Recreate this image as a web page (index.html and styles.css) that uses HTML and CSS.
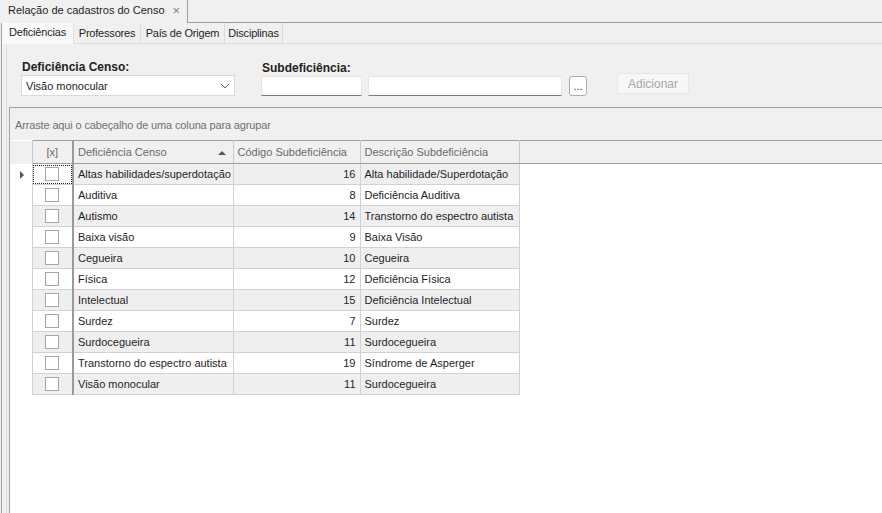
FILE: index.html
```html
<!DOCTYPE html>
<html lang="pt-BR">
  <head>
    <meta charset="UTF-8" />
    <title>Relação de cadastros do Censo</title>
    <link rel="stylesheet" href="styles.css">
  </head>
  <body>
    <div class="doc-tabs">
      <div class="doc-tab">
        <span>Relação de cadastros do Censo</span>
        <span class="close">×</span>
      </div>
      <div class="doc-fill"></div>
    </div>

    <div class="frame">
      <div class="page-tabs">
        <div class="page-tab active">Deficiências</div>
        <div class="page-tab prof">Professores</div>
        <div class="page-tab pais">País de Origem</div>
        <div class="page-tab disc">Disciplinas</div>
        <div class="page-fill"></div>
      </div>

      <div class="page">
        <div class="filters">
          <div class="field">
            <label>Deficiência Censo:</label>
            <div class="select">
              <span>Visão monocular</span>
              <svg width="10" height="6" viewBox="0 0 10 6"><path d="M1 1 L5 5 L9 1" fill="none" stroke="#606060" stroke-width="1"/></svg>
            </div>
          </div>
          <div class="field">
            <label>Subdeficiência:</label>
            <div class="inputs">
              <input type="text" class="code" />
              <input type="text" class="desc" />
              <button class="dots">...</button>
            </div>
          </div>
          <button class="add" disabled>Adicionar</button>
        </div>

        <div class="grid">
          <div class="group-panel">Arraste aqui o cabeçalho de uma coluna para agrupar</div>
          <table>
            <thead>
              <tr>
                <th class="ind"></th>
                <th class="chk">[x]</th>
                <th class="def">Deficiência Censo <span class="sort"></span></th>
                <th class="cod">Código Subdeficiência</th>
                <th class="dsc">Descrição Subdeficiência</th>
                <th class="rest"></th>
              </tr>
            </thead>
            <tbody>
              <tr class="odd">
                <td class="ind"><span class="arrow"></span></td>
                <td class="chk focus"><span class="box"></span></td>
                <td>Altas habilidades/superdotação</td>
                <td class="num">16</td>
                <td>Alta habilidade/Superdotação</td>
                <td class="rest"></td>
              </tr>
              <tr>
                <td class="ind"></td>
                <td class="chk"><span class="box"></span></td>
                <td>Auditiva</td>
                <td class="num">8</td>
                <td>Deficiência Auditiva</td>
                <td class="rest"></td>
              </tr>
              <tr class="odd">
                <td class="ind"></td>
                <td class="chk"><span class="box"></span></td>
                <td>Autismo</td>
                <td class="num">14</td>
                <td>Transtorno do espectro autista</td>
                <td class="rest"></td>
              </tr>
              <tr>
                <td class="ind"></td>
                <td class="chk"><span class="box"></span></td>
                <td>Baixa visão</td>
                <td class="num">9</td>
                <td>Baixa Visão</td>
                <td class="rest"></td>
              </tr>
              <tr class="odd">
                <td class="ind"></td>
                <td class="chk"><span class="box"></span></td>
                <td>Cegueira</td>
                <td class="num">10</td>
                <td>Cegueira</td>
                <td class="rest"></td>
              </tr>
              <tr>
                <td class="ind"></td>
                <td class="chk"><span class="box"></span></td>
                <td>Física</td>
                <td class="num">12</td>
                <td>Deficiência Física</td>
                <td class="rest"></td>
              </tr>
              <tr class="odd">
                <td class="ind"></td>
                <td class="chk"><span class="box"></span></td>
                <td>Intelectual</td>
                <td class="num">15</td>
                <td>Deficiência Intelectual</td>
                <td class="rest"></td>
              </tr>
              <tr>
                <td class="ind"></td>
                <td class="chk"><span class="box"></span></td>
                <td>Surdez</td>
                <td class="num">7</td>
                <td>Surdez</td>
                <td class="rest"></td>
              </tr>
              <tr class="odd">
                <td class="ind"></td>
                <td class="chk"><span class="box"></span></td>
                <td>Surdocegueira</td>
                <td class="num">11</td>
                <td>Surdocegueira</td>
                <td class="rest"></td>
              </tr>
              <tr>
                <td class="ind"></td>
                <td class="chk"><span class="box"></span></td>
                <td>Transtorno do espectro autista</td>
                <td class="num">19</td>
                <td>Síndrome de Asperger</td>
                <td class="rest"></td>
              </tr>
              <tr class="odd">
                <td class="ind"></td>
                <td class="chk"><span class="box"></span></td>
                <td>Visão monocular</td>
                <td class="num">11</td>
                <td>Surdocegueira</td>
                <td class="rest"></td>
              </tr>
            </tbody>
          </table>
        </div>
      </div>
    </div>
  </body>
</html>
```

FILE: styles.css
```css
* {
  box-sizing: border-box;
}

html,
body {
  height: 100%;
}

body {
  margin: 0;
  background: #f0f0f0;
  font-family: "Liberation Sans", Arial, sans-serif;
  font-size: 11px;
  color: #1e1e1e;
  display: flex;
  flex-direction: column;
  overflow: hidden;
}

/* document tab */
.doc-tabs {
  display: flex;
  height: 23px;
  flex-shrink: 0;
}

.doc-tab {
  width: 188px;
  border-right: 1px solid #a0a0a0;
  padding: 4px 0 0 8px;
  font-size: 11px;
  white-space: nowrap;
  display: flex;
  gap: 8px;
}

.doc-tab .close {
  color: #808080;
  font-size: 13px;
  line-height: 13px;
}

.doc-fill {
  flex: 1;
  border-bottom: 1px solid #a0a0a0;
}

.frame {
  flex: 1;
  display: flex;
  flex-direction: column;
  border-left: 1px solid #a0a0a0;
  margin-left: 1px;
}

/* page tabs */
.page-tabs {
  display: flex;
  height: 21px;
  flex-shrink: 0;
}

.page-tab {
  padding-top: 4px;
  text-align: center;
  white-space: nowrap;
  letter-spacing: -0.2px;
  border-right: 1px solid #dcdcdc;
  border-bottom: 1px solid #dcdcdc;
}

.page-tab.active {
  width: 72px;
  padding-top: 3px;
  background: #fafafa;
  border-bottom-color: #fafafa;
}

.page-tab.prof {
  width: 67px;
}

.page-tab.pais {
  width: 84px;
}

.page-tab.disc {
  width: 58px;
}

.page-fill {
  flex: 1;
  border-bottom: 1px solid #dcdcdc;
}

.page {
  flex: 1;
  display: flex;
  flex-direction: column;
  border-left: 1px solid #dcdcdc;
  margin-left: 4px;
}

/* filters */
.filters {
  display: flex;
  align-items: flex-end;
  padding: 16px 0 11px 14px;
  gap: 26px;
}

.field label {
  display: block;
  font-weight: bold;
  font-size: 12px;
  color: #222;
  margin-bottom: 1px;
  padding-left: 1px;
}

.select {
  width: 214px;
  height: 21px;
  background: #fff;
  border: 1px solid #d9d9d9;
  display: flex;
  align-items: center;
  justify-content: space-between;
  padding: 0 4px 0 4px;
}

.inputs {
  display: flex;
  gap: 6px;
  align-items: center;
}

input {
  height: 20px;
  border: 1px solid #e4e4e4;
  border-bottom-color: #7a7a7a;
  background: #fff;
  margin: 0;
}

input.code {
  width: 101px;
}

input.desc {
  width: 194px;
}

button {
  font-family: inherit;
  font-size: 11px;
}

.dots {
  width: 18px;
  height: 20px;
  margin-left: 1px;
  background: #fff;
  border: 1px solid #adadad;
  border-radius: 3px;
  padding: 0;
  color: #333;
  line-height: 18px;
}

.add {
  width: 72px;
  height: 21px;
  margin-bottom: 2px;
  margin-left: 4px;
  background: #f7f7f7;
  border: 1px solid #e6e6e6;
  border-radius: 3px;
  color: #a8a8a8;
  font-size: 12px;
}

/* grid */
.grid {
  flex: 1;
  background: #fff;
  border-left: 1px solid #a0a0a0;
  border-top: 1px solid #a0a0a0;
  margin-left: 2px;
}

.group-panel {
  height: 32px;
  background: #f0f0f0;
  color: #707070;
  padding: 11px 0 0 5px;
  letter-spacing: -0.14px;
}

table {
  border-collapse: collapse;
  width: 100%;
  table-layout: fixed;
}

th,
td {
  height: 21px;
  padding: 0 4px;
  white-space: nowrap;
  overflow: hidden;
  text-align: left;
  font-weight: normal;
}

th {
  height: 23px;
  background: #f0f0f0;
  color: #6a6a6a;
  border-top: 1px solid #a0a0a0;
  border-bottom: 1px solid #a0a0a0;
  border-right: 1px solid #c8c8c8;
}

td {
  border: 1px solid #d2d2d2;
}

tr.odd td {
  background: #efefef;
}

.ind {
  width: 22px;
  border-left: none;
  border-top: none;
  border-bottom: none;
  background: #fff;
}

tr.odd td.ind {
  background: #fff;
}

th.ind {
  background: #f0f0f0;
  border-right: 1px solid #c8c8c8;
}

.chk {
  width: 41px;
  text-align: center;
}

th.chk,
td.chk {
  text-align: center;
  border-right: 2px solid #9a9a9a;
}

.def {
  width: 160px;
}

.cod {
  width: 127px;
}

.dsc {
  width: 159px;
}

.sort {
  float: right;
  margin-top: 5px;
  margin-right: 3px;
  width: 0;
  height: 0;
  border-left: 4px solid transparent;
  border-right: 4px solid transparent;
  border-bottom: 4px solid #555;
}

td.num {
  text-align: right;
}

td.rest {
  border: none;
  background: #fff !important;
}

th.rest {
  border-right: none;
}

.box {
  display: inline-block;
  width: 14px;
  height: 14px;
  border: 1px solid #a6a6a6;
  background: #fff;
  vertical-align: middle;
}

td.focus {
  background: #fff !important;
  outline: 1px dotted #222;
  outline-offset: -2px;
}

.arrow {
  display: inline-block;
  width: 0;
  height: 0;
  border-top: 4px solid transparent;
  border-bottom: 4px solid transparent;
  border-left: 4px solid #555;
  margin-left: 6px;
  vertical-align: middle;
}
```
